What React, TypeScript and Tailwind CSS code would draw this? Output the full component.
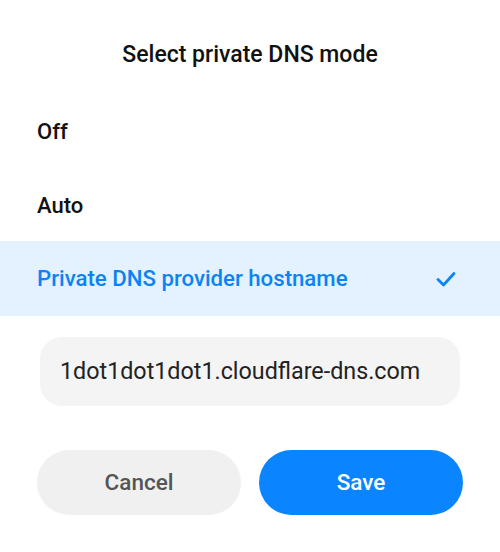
export default function App() {
  return (
    <div className="w-[500px] h-[552px] bg-white overflow-hidden font-['Roboto',sans-serif]">
      {/* title */}
      <div className="h-[93px] pt-[17px] flex items-center justify-center text-[23px] text-[#111] font-medium">
        Select private DNS mode
      </div>

      {/* options */}
      <div className="h-[76px] flex items-center px-[37px] text-[22px] font-medium text-[#111]">
        Off
      </div>
      <div className="h-[72px] flex items-center px-[37px] text-[22px] font-medium text-[#111]">
        Auto
      </div>
      <div className="h-[75px] flex items-center justify-between pl-[37px] pr-[44px] bg-[#e4f1fe] text-[22.2px] font-medium text-[#0a84f5]">
        <span>Private DNS provider hostname</span>
        <svg width="20" height="16" viewBox="0 0 20 16" fill="none">
          <path d="M2 8.5 L7.5 14 L18 2.5" stroke="#0a84f5" strokeWidth="2.8" strokeLinecap="round" strokeLinejoin="round" />
        </svg>
      </div>

      {/* hostname input */}
      <div className="px-[40px] pt-[21px]">
        <div className="h-[69px] rounded-[22px] bg-[#f4f4f4] flex items-center px-[20px] text-[23.3px] text-[#222]">
          1dot1dot1dot1.cloudflare-dns.com
        </div>
      </div>

      {/* buttons */}
      <div className="flex gap-[18px] px-[37px] pt-[44px]">
        <button className="flex-1 h-[65px] rounded-full bg-[#f0f0f0] text-[22.5px] font-medium text-[#555]">
          Cancel
        </button>
        <button className="flex-1 h-[65px] rounded-full bg-[#0a84ff] text-[22.5px] font-medium text-white">
          Save
        </button>
      </div>
    </div>
  );
}
